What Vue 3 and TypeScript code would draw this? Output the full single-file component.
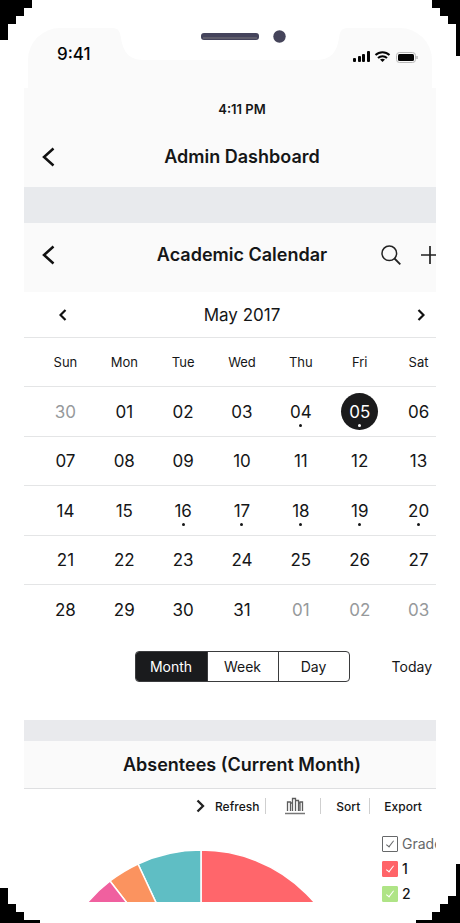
<script setup lang="ts">
import { ref } from 'vue'

interface Day {
  key: string
  label: string
  outside: boolean
  event: boolean
}

interface Slice {
  color: string
  path: string
}

const weekdays = ['Sun', 'Mon', 'Tue', 'Wed', 'Thu', 'Fri', 'Sat']
const views = ['Month', 'Week', 'Day']
const eventDays = [4, 5, 16, 17, 18, 19, 20]

const activeView = ref('Month')
const selected = ref('d5')

const pad = (n: number): string => String(n).padStart(2, '0')

const days: Day[] = [
  { key: 'p30', label: '30', outside: true, event: false },
  ...Array.from({ length: 31 }, (_, i) => ({
    key: `d${i + 1}`,
    label: pad(i + 1),
    outside: false,
    event: eventDays.includes(i + 1),
  })),
  ...[1, 2, 3].map((n) => ({ key: `n${n}`, label: pad(n), outside: true, event: false })),
]
const weeks: Day[][] = Array.from({ length: 5 }, (_, w) => days.slice(w * 7, w * 7 + 7))

const slices: Slice[] = [
  { color: '#ff666b', path: 'M121 149V0A149 149 0 0 1 270 149Z' },
  { color: '#5fbec4', path: 'M121 149L58 14A149 149 0 0 1 121 0Z' },
  { color: '#fb935f', path: 'M121 149L30 31A149 149 0 0 1 58 14Z' },
  { color: '#f0609f', path: 'M121 149H-28A149 149 0 0 1 30 31Z' },
]

const legend = ref([
  { name: 'Grade', tone: 'all', checked: true },
  { name: '1', tone: 'red', checked: true },
  { name: '2', tone: 'green', checked: true },
])
</script>

<template>
  <div class="device">
    <svg class="corner tl" width="32" height="40" aria-hidden="true"><path d="M0 0H32V8H24V16H16V24H8V40H0Z" /></svg>
    <svg class="corner tr" width="28" height="56" aria-hidden="true"><path d="M0 0H28V56H24V24H16V16H8V8H0Z" /></svg>
    <svg class="corner bl" width="40" height="35" aria-hidden="true"><path d="M0 0H8V16H16V24H24V32H40V35H0Z" /></svg>
    <svg class="corner br" width="44" height="59" aria-hidden="true"><path d="M44 0H40V32H32V40H24V48H16V56H0V59H44Z" /></svg>

    <main class="screen">
      <div class="status">
        <span class="clock">9:41</span>
        <svg class="notch" width="236" height="32" viewBox="0 0 236 32" aria-hidden="true">
          <path d="M0 0C7 0 8 4 9 10C11 25 18 32 32 32H204C218 32 225 25 227 10C228 4 229 0 236 0Z" fill="#fff" />
          <rect x="89" y="5" width="58" height="7" rx="3" fill="#45445c" />
          <rect x="91" y="9" width="54" height="2" fill="#5f5d6b" />
          <circle cx="167.500" cy="8.500" r="6.200" fill="#45445a" />
        </svg>
        <svg class="signals" width="66" height="14" viewBox="0 0 66 14" aria-hidden="true">
          <g fill="#050505">
            <rect x="0" y="8" width="3" height="4" rx="1" />
            <rect x="5" y="6" width="3" height="6" rx="1" />
            <rect x="9" y="4" width="3" height="8" rx="1" />
            <rect x="14" y="1" width="3" height="11" rx="1" />
            <rect x="45" y="4" width="16" height="7" rx="1.500" />
          </g>
          <g fill="none" stroke="#050505" stroke-width="2">
            <path d="M22.500 5A10 10 0 0 1 36.500 5" />
            <path d="M25 8A6.500 6.500 0 0 1 34 8" />
          </g>
          <path d="M27 9.600Q29.500 8 32 9.600L29.500 12Z" fill="#050505" />
          <rect x="43.500" y="2.500" width="19" height="10" rx="3" fill="none" stroke="#b8b8b8" />
          <path d="M64 6V9" stroke="#b8b8b8" stroke-width="1.500" />
        </svg>
      </div>

      <div class="page">
        <p class="time">4:11 PM</p>
        <header class="bar dashboard">
          <button class="icon" type="button" aria-label="Back">
            <svg width="14" height="20" viewBox="0 0 14 20"><path d="M12.500 1.500L3 10L12.500 18.500" fill="none" stroke="#111" stroke-width="2.500" /></svg>
          </button>
          <h1>Admin Dashboard</h1>
        </header>

        <section class="calendar">
          <header class="bar academic">
            <button class="icon" type="button" aria-label="Back to dashboard">
              <svg width="14" height="20" viewBox="0 0 14 20"><path d="M12.500 1.500L3 10L12.500 18.500" fill="none" stroke="#111" stroke-width="2.500" /></svg>
            </button>
            <h2>Academic Calendar</h2>
            <div class="actions">
              <button class="icon" type="button" aria-label="Search">
                <svg width="20" height="20" viewBox="0 0 20 20" fill="none" stroke="#222" stroke-width="1.500"><circle cx="8.300" cy="8.300" r="7.300" /><path d="M13.500 13.500L19.300 19.300" stroke-width="1.800" /></svg>
              </button>
              <button class="icon" type="button" aria-label="Add">
                <svg width="18" height="20" viewBox="0 0 18 20"><path d="M0 10H18M9 1V19" stroke="#222" stroke-width="1.700" /></svg>
              </button>
            </div>
          </header>

          <div class="month">
            <button class="icon" type="button" aria-label="Previous month">
              <svg width="8" height="12" viewBox="0 0 8 12"><path d="M6.500 1L1.500 6L6.500 11" fill="none" stroke="#111" stroke-width="2.200" /></svg>
            </button>
            <span>May 2017</span>
            <button class="icon" type="button" aria-label="Next month">
              <svg width="8" height="12" viewBox="0 0 8 12"><path d="M1.500 1L6.500 6L1.500 11" fill="none" stroke="#111" stroke-width="2.200" /></svg>
            </button>
          </div>

          <table>
            <thead>
              <tr><th v-for="name in weekdays" :key="name" scope="col">{{ name }}</th></tr>
            </thead>
            <tbody>
              <tr v-for="(week, index) in weeks" :key="index">
                <td v-for="day in week" :key="day.key">
                  <button
                    class="day"
                    type="button"
                    :class="{ outside: day.outside, event: day.event, selected: day.key === selected }"
                    @click="selected = day.key"
                  >{{ day.label }}</button>
                </td>
              </tr>
            </tbody>
          </table>

          <div class="switcher">
            <div class="segments">
              <button
                v-for="view in views"
                :key="view"
                type="button"
                :class="{ active: view === activeView }"
                @click="activeView = view"
              >{{ view }}</button>
            </div>
            <button class="today" type="button">Today</button>
          </div>
        </section>

        <section class="absentees">
          <header><h2>Absentees (Current Month)</h2></header>
          <div class="tools">
            <button class="refresh" type="button">
              <svg width="9" height="14" viewBox="0 0 9 14"><path d="M1.500 1.500L7 7L1.500 12.500" fill="none" stroke="#222" stroke-width="2.300" /></svg>
              Refresh
            </button>
            <button class="chart-type" type="button" aria-label="Chart type">
              <svg width="20" height="18" viewBox="0 0 20 18" fill="none" stroke="#5c5c5c" stroke-width="1.300"><path d="M2.500 14V5H5.500V14M7.500 14V1.500H10.500V14M10.500 3.500H13.500V14M15 14V5H17.500V14M5.500 6H7.500M13.500 6H15" /><path d="M0 16.500H20" stroke="#777" stroke-width="1.500" /></svg>
            </button>
            <button class="sort" type="button">Sort</button>
            <button class="export" type="button">Export</button>
          </div>
          <div class="chart">
            <svg class="pie" width="242" height="52" viewBox="0 0 242 52" role="img" aria-label="Absentees by grade">
              <path v-for="slice in slices" :key="slice.color" :d="slice.path" :fill="slice.color" stroke="#fff" stroke-width="1.500" />
            </svg>
            <div class="legend">
              <label v-for="item in legend" :key="item.name" :class="item.tone">
                <input v-model="item.checked" type="checkbox" />
                <span>{{ item.name }}</span>
              </label>
            </div>
          </div>
        </section>
      </div>
    </main>
  </div>
</template>

<style>
body {
  margin: 0;
  background: #fff;
}
</style>

<style scoped>
.device {
  position: relative;
  box-sizing: border-box;
  min-height: 100vh;
  padding: 28px 24px 21px;
  background: #fff;
  color: #151617;
  font-family: Inter, "Liberation Sans", sans-serif;
}
.corner {
  position: absolute;
  display: block;
}
.tl { top: 0; left: 0; }
.tr { top: 0; right: 0; }
.bl { bottom: 0; left: 0; }
.br { bottom: 0; right: 0; }
.screen {
  overflow: hidden;
}
button {
  margin: 0;
  padding: 0;
  border: 0;
  background: none;
  color: inherit;
  font: inherit;
  cursor: pointer;
}
svg {
  display: block;
}
h1,
h2,
p {
  margin: 0;
}
h1,
h2 {
  font-size: 18px;
  line-height: 24px;
  font-weight: 600;
}
.status {
  display: grid;
  grid-template-columns: 1fr auto 1fr;
  height: 60px;
  margin: 0 4px;
  border-radius: 32px 32px 0 0;
  background: #fafafa;
}
.clock {
  padding: 16px 0 0 29px;
  font-size: 17px;
  line-height: 20px;
  font-weight: 500;
  color: #050505;
}
.signals {
  justify-self: end;
  margin: 22px 13px 0 0;
}
.page {
  margin-right: -12px;
}
.time {
  padding: 12px 0 10px 12px;
  background: #fafafa;
  font-size: 13px;
  line-height: 18px;
  font-weight: 600;
  text-align: center;
}
.bar {
  display: grid;
  grid-template-columns: 1fr auto 1fr;
  align-items: center;
  padding: 0 5px 0 17px;
  background: #fafafa;
}
.bar > .icon {
  justify-self: start;
}
.dashboard {
  height: 58px;
  padding-bottom: 1px;
}
.academic {
  height: 64px;
  padding-bottom: 5px;
}
.actions {
  display: flex;
  justify-content: end;
  gap: 20px;
  padding-right: 4px;
}
.calendar {
  border-top: 36px solid #e8eaed;
}
.month {
  display: flex;
  align-items: center;
  justify-content: space-between;
  height: 45px;
  padding: 0 23px 0 35px;
  font-size: 17px;
}
table {
  display: block;
}
thead,
tbody {
  display: block;
}
tr {
  display: grid;
  grid-template-columns: repeat(7, 1fr);
  box-sizing: border-box;
  height: 49px;
  padding-left: 12px;
  border-top: 1px solid #e4e5e6;
  align-items: center;
  justify-items: center;
}
tbody tr:nth-child(odd) {
  height: 50px;
}
th {
  padding: 0;
  font-size: 13px;
  font-weight: 400;
}
td {
  padding: 0;
}
.day {
  position: relative;
  display: block;
  width: 37px;
  height: 37px;
  border-radius: 50%;
  font-size: 17px;
}
.outside {
  color: #96999b;
}
.event::after {
  content: "";
  position: absolute;
  left: 17px;
  bottom: 3px;
  width: 3px;
  height: 3px;
  border-radius: 50%;
  background: currentColor;
}
.selected {
  background: #1b1b1c;
  color: #fff;
}
.switcher {
  display: grid;
  grid-template-columns: 1fr auto 1fr;
  align-items: center;
  padding: 17px 16px 38px 28px;
  font-size: 14px;
}
.segments {
  grid-column: 2;
  display: grid;
  grid-template-columns: repeat(3, 1fr);
  box-sizing: border-box;
  width: 215px;
  height: 31px;
  overflow: hidden;
  border: 1px solid #3a3b3d;
  border-radius: 4px;
}
.segments button + button {
  border-left: 1px solid #3a3b3d;
}
.segments .active {
  background: #1a1b1d;
  color: #fff;
}
.today {
  justify-self: end;
}
.absentees {
  border-top: 21px solid #e9eaed;
}
.absentees header {
  padding: 12px 0 11px 12px;
  border-bottom: 1px solid #dedfe1;
  background: #fafafa;
  text-align: center;
}
.tools {
  display: flex;
  align-items: center;
  height: 34px;
  padding-left: 172px;
  font-size: 12px;
  font-weight: 500;
}
.tools button {
  display: flex;
  align-items: center;
  height: 16px;
}
.refresh {
  gap: 10px;
  padding-right: 6px;
}
.chart-type {
  padding: 0 15px 0 19px;
}
.tools .chart-type,
.tools .sort,
.tools .export {
  border-left: 1px solid #cfcfcf;
}
.sort {
  padding: 0 9px 0 15px;
}
.export {
  padding-left: 14px;
}
.chart {
  display: flex;
  justify-content: space-between;
  align-items: end;
  height: 79px;
  padding-left: 56px;
}
.legend {
  display: grid;
  align-self: start;
  gap: 9px;
  width: 66px;
  padding-top: 13px;
}
.legend label {
  display: flex;
  align-items: center;
  gap: 4px;
  height: 16px;
  font-size: 14px;
  line-height: 16px;
  font-weight: 500;
}
.legend input {
  position: relative;
  flex: none;
  appearance: none;
  box-sizing: border-box;
  width: 16px;
  height: 16px;
  margin: 0;
  border: 1px solid currentColor;
  border-radius: 1px;
}
.legend input:checked::after {
  content: "";
  position: absolute;
  left: 5px;
  top: 2px;
  width: 3px;
  height: 7px;
  border: solid currentColor;
  border-width: 0 1px 1px 0;
  transform: rotate(38deg);
}
.legend .all {
  color: #66686a;
  font-weight: 400;
}
.all input {
  color: #66686a;
}
.red input {
  border-color: #ff6468;
  background: #ff6468;
  color: #fff;
}
.green input {
  border-color: #afe486;
  background: #afe486;
  color: #fff;
}
</style>
